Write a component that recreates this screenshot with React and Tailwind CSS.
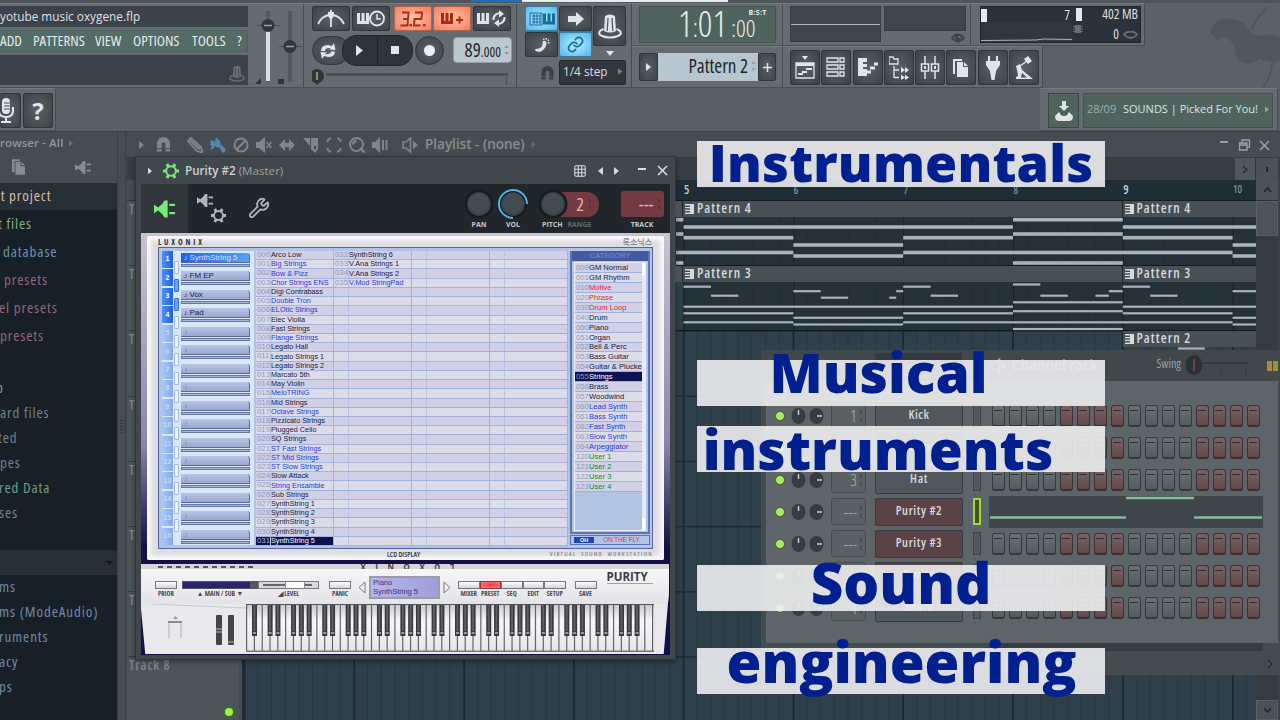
import React from "react";
import { Link, Wrench, Grid3x3 } from "lucide-react";

const COND = "font-['Open_Sans',sans-serif] [font-stretch:75%] whitespace-nowrap";
const SANS = "font-['Open_Sans',sans-serif] [font-stretch:100%] whitespace-nowrap";
const ARIAL = "font-['Liberation_Sans',sans-serif] whitespace-nowrap";
const DARK_BTN =
  "flex items-center justify-center shrink-0 rounded-[2px] border border-[#30363b] bg-radial from-[#5a6266] to-[#3c4348] text-[#dfe5e8]";
const BLUE_BTN =
  "flex items-center justify-center shrink-0 rounded-[2px] border border-[#3a7ea3] bg-radial from-[#b4efff] to-[#4db8ee] text-[#1b6a9c]";
const RED_BTN =
  "flex items-center justify-center shrink-0 rounded-[2px] border border-[#b3604d] bg-radial from-[#ffc6ac] to-[#f57a5c] text-[#b02a12]";

function Icon({ w = 20, h = 20, vb, children, className = "" }) {
  return (
    <svg width={w} height={h} viewBox={vb || `0 0 ${w} ${h}`} className={`block shrink-0 ${className}`} fill="currentColor">
      {children}
    </svg>
  );
}

const Tri = ({ w = 5, h = 8, className = "" }) => (
  <Icon w={w} h={h} vb="0 0 5 8" className={className}>
    <path d="M0 0L5 4L0 8Z" />
  </Icon>
);

const Magnet = ({ className = "", w = 15, h = 16 }) => (
  <Icon w={w} h={h} vb="0 0 15 16" className={className}>
    <path d="M0.5 12V7a7 7 0 0 1 14 0v5h-5V7.5a2 2 0 0 0-4 0V12Z M0.5 13h5v2.5h-5Z M9.5 13h5v2.5h-5Z" />
  </Icon>
);

const Keys = () => <path d="M0 0H3V8H4.5V0H7.5V8H9V0H12V11H0Z" />;

const Hat = ({ w = 24, h = 26, className = "", slat = "#4a5257" }) => (
  <Icon w={w} h={h} vb="0 0 24 26" className={className}>
    <path d="M7 3Q12 0 17 3L18 18Q12 21 6 18Z" />
    <path d="M10 5L9.200 18M14 5L14.800 18" stroke={slat} strokeWidth="1.200" />
    <path d="M5.500 16C0 18 0 21.500 4 23Q12 26 20 23C24 21.500 24 18 18.500 16" fill="none" stroke="currentColor" strokeWidth="2" />
  </Icon>
);

const Plug = ({ w = 20, h = 16, className = "" }) => (
  <Icon w={w} h={h} vb="0 0 20 16" className={className}>
    <path d="M0 4L4 6.500L8 3L10 0H13V16H10L8 13L4 9.500L0 12Z" />
    <path d="M14.500 4H20M14.500 12H20" stroke="currentColor" strokeWidth="2.2" />
  </Icon>
);

const Gear = ({ w = 16, h = 16, className = "" }) => (
  <Icon w={w} h={h} vb="0 0 16 16" className={className}>
    <circle cx="8" cy="8" r="4.800" fill="none" stroke="currentColor" strokeWidth="2" />
    <path d="M13 8H16M0 8H3M10.500 3.700L12 1.100M5.500 3.700L4 1.100M10.500 12.300L12 14.900M5.500 12.300L4 14.900" stroke="currentColor" strokeWidth="3" />
  </Icon>
);

const Docs = ({ w = 15, h = 18, className = "" }) => (
  <Icon w={w} h={h} vb="0 0 15 18" className={className}>
    <path d="M0 0H9V2H3V15H0Z M4 3H10V8H15V18H4Z M11 3L15 7H11Z" />
  </Icon>
);

function Panel({ className = "", children }) {
  return (
    <div className={`shrink-0 border-t border-r border-b border-t-[#747c81] border-r-[#464d52] border-b-[#4a5156] bg-[#646c71] ${className}`}>
      {children}
    </div>
  );
}

function FilePanel() {
  return (
    <Panel className="flex h-[85px] w-[304px]">
      <div className="flex w-[248px] flex-col gap-[3px] pt-[2px]">
        <div className={`flex h-[21px] items-center bg-[#3c4249] text-[11.800px] text-[#dde1e4] ${SANS}`}>yotube music oxygene.flp</div>
        <div className={`flex h-[22px] items-center border border-l-0 border-[#48615d] bg-[#556b68] pb-[2px] text-[15px] text-[#e3eae9] ${COND}`}>
          <span className="w-[33px]">ADD</span>
          <span className="w-[62px]">PATTERNS</span>
          <span className="w-[38px]">VIEW</span>
          <span className="w-[59px]">OPTIONS</span>
          <span className="w-[45px]">TOOLS</span>
          <span>?</span>
        </div>
        <div className="flex h-[30px] items-end justify-end bg-[#3c4249] pr-[3px] pb-[3px] text-[#6a7278]">
          <Hat w={16} h={17} slat="#3c4249" />
        </div>
      </div>
      <Icon w={54} h={82} className="text-[#30363c]">
        <rect x="18" y="7" width="4" height="71" fill="#535a5f" />
        <rect x="40" y="7" width="4" height="71" fill="#535a5f" />
        <rect x="18" y="26" width="4" height="51" fill="#d7dee2" />
        <path d="M9 21.500H32M31 42.500H54" stroke="#474e53" />
        <circle cx="20" cy="21.500" r="6.500" />
        <circle cx="42" cy="42.500" r="6.500" />
        <path d="M16 21.500H24M38 42.500H46" stroke="#9aa2a7" strokeWidth="1.500" />
        <path d="M7 80L13 74V80Z M30 75H36V80H30Z" />
      </Icon>
    </Panel>
  );
}

function TransportPanel() {
  return (
    <Panel className="flex h-[85px] w-[213px] flex-col pt-[2px] pl-[8px]">
      <div className="flex h-[25px] gap-[2px]">
        <div className={`w-[38px] ${DARK_BTN}`}>
          <Icon w={28} h={17}>
            <path d="M1 14Q5 6 12 5M27 14Q23 6 16 5M14 0V17" fill="none" stroke="currentColor" strokeWidth="1.800" />
            <path d="M11 2H17V6L14 10L11 6Z" />
          </Icon>
        </div>
        <div className={`w-[38px] ${DARK_BTN}`}>
          <Icon w={28} h={17}>
            <g transform="translate(0,3)"><Keys /></g>
            <circle cx="20" cy="8.500" r="7" fill="none" stroke="currentColor" strokeWidth="1.800" />
            <path d="M20 4V9H24" fill="none" stroke="currentColor" strokeWidth="1.500" />
          </Icon>
        </div>
        <div className={`ml-[2px] w-[38px] ${RED_BTN}`}>
          <Icon w={28} h={16}>
            <path d="M3 1.500H9.500L9 8L8.500 14.500H1.500M4 8H9M16 1.500H23L22.500 8H15.500L15 14.500H21.500" fill="none" stroke="currentColor" strokeWidth="1.900" />
            <path d="M10.500 13H13V15.500H10.500ZM24 13H26.500V15.500H24Z" />
          </Icon>
        </div>
        <div className={`-ml-px w-[38px] ${RED_BTN}`}>
          <Icon w={24} h={14}>
            <g transform="translate(1,1)"><Keys /></g>
            <path d="M16 8H23M19.500 4.500V11.500" stroke="currentColor" strokeWidth="2" />
          </Icon>
        </div>
        <div className={`w-[38px] ${DARK_BTN}`}>
          <Icon w={30} h={17}>
            <g transform="translate(0,3)"><Keys /></g>
            <path d="M16.500 10A6 6 0 0 1 24 3.500M27.500 7A6 6 0 0 1 20 13.500" fill="none" stroke="currentColor" strokeWidth="2" />
            <path d="M22 0L27 4L22 7.500Z M22 17L17 13L22 9.500Z" />
          </Icon>
        </div>
      </div>
      <div className="mt-[4px] flex h-[30px] items-center">
        <div className={`h-[29px] w-[38px] rounded-full! pr-[6px] ${DARK_BTN}`}>
          <Icon w={16} h={16} className="mt-[1px]">
            <path d="M1 8Q1 2 8 2L12 3L14 0L15.500 7L9 6.500L11 5Q5 4.500 5 8Z M15 8.500Q15 14 8 14L4 13L2 16L0.500 9L7 9.500L5 11.200Q11 11.500 11 8.500Z" />
          </Icon>
        </div>
        <div className="-ml-[8px] flex h-[31px] w-[71px] items-center rounded-[14px] border border-[#23282d] bg-[#2f343a] text-[#e3e8ea]">
          <div className="flex h-full w-[35px] items-center justify-center border-r border-[#1f2428]"><Tri w={7} h={11} /></div>
          <div className="flex h-full w-[35px] items-center justify-center"><div className="size-[8px] bg-[#dde3e6]" /></div>
        </div>
        <div className={`ml-[2px] size-[29px] rounded-full! ${DARK_BTN}`}><div className="size-[11px] rounded-full bg-[#eceff1]" /></div>
        <div className={`ml-[9px] flex h-[26px] w-[59px] items-center justify-end rounded-[4px] border border-[#8f9aa1] bg-[#bcc8cf] pr-[1px] text-[#22282c] ${COND}`}>
          <span className="text-[19px]">89</span>
          <span className="mt-[4px] text-[13.500px]">.000</span>
          <Icon w={7} h={12} className="ml-[2px] text-[#8f9aa1]"><path d="M1 4L3.500 1L6 4ZM1 8L3.500 11L6 8Z" /></Icon>
        </div>
      </div>
      <Icon w={202} h={20} className="text-[#2f353a]">
        <rect x="14" y="8" width="182" height="3" fill="#4b5257" />
        <path d="M194.500 12V20" stroke="#4b5257" />
        <circle cx="5" cy="11" r="7" />
        <path d="M2 17H8L5 20Z" />
        <path d="M5 7V15" stroke="#a9b84c" strokeWidth="1.500" />
      </Icon>
    </Panel>
  );
}

function SnapPanel() {
  return (
    <Panel className="flex h-[85px] w-[115px] flex-col pt-[2px] pl-[8px]">
      <div className="flex gap-[1px]">
        <div className="flex flex-col gap-[1px]">
          <div className={`h-[25px] w-[33px] ${BLUE_BTN}`}>
            <Icon w={26} h={14}>
              <path d="M1 1H13V13H1Z M3 4H12M3 7H12M3 10H12M5 2V12M8 2V12M11 2V12" fill="none" stroke="currentColor" strokeWidth="1" />
              <g transform="translate(14,1.500)"><Keys /></g>
            </Icon>
          </div>
          <div className={`h-[25px] w-[33px] ${DARK_BTN}`}>
            <Icon w={16} h={16}><path d="M9 4Q12.500 3 12.500 6.500Q12 10 10 12Q7 16 4 14.500Q1 15 1 12.500Q2 11.500 5 11.500Q8.500 10 8.500 7Z M9 1.500H10.500V3H9ZM11.500 1H13V2.500H11.500ZM13.500 2.500H15V4H13.500ZM14 5H15.500V6.500H14Z" /></Icon>
          </div>
        </div>
        <div className="flex flex-col gap-[1px]">
          <div className={`h-[25px] w-[33px] ${DARK_BTN}`}><Icon w={16} h={14}><path d="M0 4H8V0L16 7L8 14V10H0Z" /></Icon></div>
          <div className={`h-[25px] w-[33px] ${BLUE_BTN}`}><Link size={17} strokeWidth={2.4} /></div>
        </div>
        <div className="flex flex-col items-center gap-[5px]">
          <div className={`h-[40px] w-[33px] ${DARK_BTN}`}><Hat /></div>
          <Icon w={8} h={5} className="text-[#dfe5e8]"><path d="M0 0H8L4 5Z" /></Icon>
        </div>
      </div>
      <div className="mt-[3px] flex h-[25px] items-center">
        <Magnet w={13} h={14} className="ml-[16px] text-[#3a4146]" />
        <div className={`ml-[5px] flex h-[25px] w-[67px] items-center justify-between rounded-[2px] border border-[#24292d] bg-[#31373c] px-[3px] pb-[2px] text-[11.800px] text-[#d8dde0] ${SANS}`}>
          1/4 step <Tri w={4} h={7} className="text-[#7c8488]" />
        </div>
      </div>
    </Panel>
  );
}

function TimePanel() {
  return (
    <div className="flex w-[151px] shrink-0 flex-col">
      <Panel className="h-[43px] pt-[2px] pl-[7px]">
        <div className={`flex h-[37px] w-[137px] border border-[#43544f] bg-[#51635f] pl-[38px] text-[#e4ecea] ${COND}`}>
          <span className="mt-[-6px] text-[36px] leading-[45px] font-light">1<span className="text-[26px]">:</span>01</span>
          <span className="ml-[4px] mt-[4px] text-[24px] leading-[34px] font-light">:00</span>
          <span className={`mt-px -ml-[7px] text-[7px] leading-[10px] font-bold tracking-[0.300px] ${SANS}`}>B:S:T</span>
        </div>
      </Panel>
      <Panel className="flex h-[42px] pt-[6px] pl-[7px]">
        <div className={`h-[28px] w-[19px] ${DARK_BTN}`}><Tri w={5} h={8} /></div>
        <div className={`flex h-[28px] w-[100px] items-center justify-end bg-[#b7c6ce] pr-[1px] pb-[2px] text-[19px] text-[#20272b] ${COND}`}>
          Pattern 2
          <Icon w={7} h={12} className="ml-[2px] text-[#95a3ab]"><path d="M1 4L3.500 1L6 4ZM1 8L3.500 11L6 8Z" /></Icon>
        </div>
        <div className={`h-[28px] w-[18px] ${DARK_BTN}`}><Icon w={9} h={9}><path d="M4.500 0V9M0 4.500H9" stroke="currentColor" strokeWidth="1.500" /></Icon></div>
      </Panel>
    </div>
  );
}

const VIEW_ICONS = [
  <><path d="M7 0H13L10 4Z" /><path d="M1 7H19V22H1Z" fill="none" stroke="currentColor" strokeWidth="1.300" /><path d="M1 7H19V10H1Z" /><path d="M3 18H8M7 16H12M11 13H17" stroke="currentColor" strokeWidth="2.200" /></>,
  <path d="M1 2H12V6H1ZM14 2H18V6H14ZM1 9H12V13H1ZM14 9H18V13H14ZM1 16H12V20H1ZM14 16H18V20H14Z" fill="none" stroke="currentColor" strokeWidth="1.300" />,
  <><path d="M0 2H9V6H5V8H9V11H5V13H9V20H0Z" /><path d="M9 16H13M12 12H17M16 8H20" stroke="currentColor" strokeWidth="3" /></>,
  <><path d="M0 1H4L5 3H9V8H0Z" fill="none" stroke="currentColor" strokeWidth="1.300" /><path d="M5 10V22M5 14H10M5 21.500H10" fill="none" stroke="currentColor" strokeWidth="1.300" /><path d="M12 11L16 14L12 17ZM16 11L20 14L16 17ZM12 18.500L16 21.500L12 24ZM16 18.500L20 21.500L16 24Z" /></>,
  <><path d="M5 0V23M15 0V23" stroke="currentColor" strokeWidth="1.500" /><path d="M1.500 8H8.500V15H1.500ZM11.500 8H18.500V15H11.500Z" fill="#4a5257" stroke="currentColor" strokeWidth="1.500" /><path d="M4 10H6V13H4ZM14 10H16V13H14Z" /></>,
  <path d="M2 3H11V5H4V18H2Z M6 6H12V11H17V21H6Z M13 6L17 10H13Z" />,
  <path d="M5 0H7V5H13V0H15V5H17V9L13 15L11.500 24H8.500L7 15L3 9V5H5Z" />,
  <><path d="M10 3L14 0L18 5L14 8Z" /><path d="M13 5L6 10" stroke="currentColor" strokeWidth="1.500" /><path d="M2 10L6 8L8 14L19 23H2V21L4 20L3 14Z" /><path d="M8 17L13 21.500H7Z" fill="#4a5257" /></>,
];

function TopToolbar() {
  return (
    <div className="flex h-[85px] bg-[#5a6268]">
      <FilePanel />
      <TransportPanel />
      <SnapPanel />
      <TimePanel />
      <div className="flex flex-col">
        <div className="flex">
          <Panel className="flex h-[43px] w-[188px] gap-[3px] pt-[2px] pl-[7px]">
            <div className="flex h-[36px] w-[91px] items-center border border-[#363c42] bg-[#40464c]"><div className="h-px w-full bg-[#aeb6bb]" /></div>
            <div className="flex w-[82px] flex-col items-end">
              <div className="h-[25px] w-full border border-[#363c42] bg-[#40464c]" />
              <Icon w={14} h={10} className="mt-[2px] mr-px text-[#3b4248]"><path d="M1 5Q7 -2 13 5Q7 12 1 5Z" fill="none" stroke="currentColor" strokeWidth="1.800" /><circle cx="7" cy="5" r="2.800" /><circle cx="8" cy="4" r="1" fill="#7a8287" /></Icon>
            </div>
          </Panel>
          <Panel className="h-[43px] w-[174px] pt-[2px] pl-[9px]">
            <div className={`flex h-[37px] w-[161px] border border-[#20262b] bg-[#2b3239] text-[13.500px] leading-[15px] text-[#d9dfe2] ${COND}`}>
              <div className="flex w-[91px] flex-col">
                <div className="flex h-[16px] items-center justify-between pr-[2px]"><div className="h-[13px] w-[6px] bg-[#e3e9ec]" />7</div>
                <Icon w={91} h={19} className="bg-[#30373e]"><path d="M0 17.500L55 17L62 16L91 16.500" fill="none" stroke="#aab2b7" /></Icon>
              </div>
              <div className="flex w-[68px] flex-col pr-[2px] pl-[4px]">
                <div className="flex h-[16px] items-center justify-between"><div className="h-[13px] w-[6px] bg-[#e3e9ec]" />402 MB</div>
                <div className="flex items-center pt-[3px]">
                  <Icon w={10} h={8} className="mb-[10px] -ml-[3px] text-[#656e74]"><path d="M2 0H8V8H2ZM0 1H10V2H0ZM0 3.500H10V4.500H0ZM0 6H10V7H0Z" /></Icon>
                  <span className="mr-[4px] ml-auto">0</span>
                  <Icon w={15} h={9} className="text-[#656e74]"><path d="M1 4.500Q4 1 7.500 2Q11 1 14 4.500Q11 8 7.500 8Q4 8 1 4.500Z" fill="none" stroke="currentColor" strokeWidth="1.800" /></Icon>
                </div>
              </div>
            </div>
          </Panel>
        </div>
        <Panel className="flex h-[42px] w-[260px] gap-[1.300px] pt-[3px] pl-[7px]">
          {VIEW_ICONS.map((ic, i) => (
            <div key={i} className={`h-[35px] w-[30px] ${DARK_BTN}`}><Icon w={20} h={24}>{ic}</Icon></div>
          ))}
        </Panel>
      </div>
      <Icon w={75} h={85} className="ml-auto text-[#50575c]">
        <path d="M5 30Q8 16 25 15Q38 17 46 29Q52 34 60 32Q68 30 75 36V58Q64 60 54 56Q48 62 38 60Q29 56 30 46Q27 36 19 34L10 38Q13 34 5 30Z" />
        <path d="M46 27Q52 14 62 4M68 55Q67 72 58 85" fill="none" stroke="currentColor" strokeWidth="2" />
      </Icon>
    </div>
  );
}

function SecondToolbar() {
  return (
    <div className="flex h-[43px] justify-between bg-[#596167]">
      <Panel className="flex h-[43px] w-[56px] gap-[2px] pt-[4px]">
        <div className={`h-[35px] w-[21px] border-l-0! pr-[8px] ${DARK_BTN}`}>
          <Icon w={16} h={25}>
            <rect x="4" y="0" width="8" height="16" rx="4" />
            <path d="M1 9V13Q1 19 8 19T15 13V9M8 19V23M3 24H13" fill="none" stroke="currentColor" strokeWidth="2" />
            <path d="M6 5H12M6 8H12M6 11H12" stroke="#4a5257" strokeWidth="1" />
          </Icon>
        </div>
        <div className={`h-[35px] w-[30px] text-[24px] font-bold ${DARK_BTN} ${SANS}`}>?</div>
      </Panel>
      <Panel className="mr-[2px] flex h-[43px] w-[238px] gap-[4px] pt-[4px] pl-[8px]">
        <div className="flex h-[35px] w-[31px] items-center justify-center border border-[#394845] bg-[#50635f] text-[#dfe7e5]">
          <Icon w={18} h={20}><path d="M7 0H11V5H14L9 10L4 5H7Z M4 11L0 15Q0 20 4 20H14Q18 20 18 15L14 11L12 14Q12 15 9 15T6 14Z" /></Icon>
        </div>
        <div className={`flex h-[35px] w-[190px] items-center border border-[#43544f] bg-[#51635f] pb-[2px] pl-[3px] text-[11px] text-[#dbe4e2] ${SANS}`}>
          <span className="w-[36px] text-[#9fadaa]">28/09</span>SOUNDS | Picked For You!<Tri w={4} h={7} className="mr-[3px] ml-auto text-[#93a19e]" />
        </div>
      </Panel>
    </div>
  );
}

const BROWSER_TOP = [
  ["-ml-[2px]", "t files", "text-[#7fae80]", "h-[28px]"],
  ["ml-[3px]", "database", "text-[#7090b0]", "h-[28px]"],
  ["ml-[4px]", "presets", "text-[#92647f]", "h-[28px]"],
  ["-ml-[1px]", "el presets", "text-[#92647f]", "h-[28px]"],
  ["ml-0", "presets", "text-[#92647f]", "h-[28px]"],
  ["-ml-[4px]", "p", "text-[#7fae80]", "h-[25px] mt-[26px]"],
  ["ml-0", "ard files", "text-[#70828e]", "h-[25px]"],
  ["-ml-[2px]", "ted", "text-[#70828e]", "h-[25px]"],
  ["ml-0", "pes", "text-[#70828e]", "h-[25px]"],
  ["-ml-[1px]", "red Data", "text-[#6f9c80]", "h-[25px]"],
  ["-ml-[1px]", "ses", "text-[#70828e]", "h-[25px]"],
];
const BROWSER_BOTTOM = [
  ["-ml-[1px]", "ms"],
  ["-ml-[1px]", "ms (ModeAudio)"],
  ["-ml-[1px]", "ruments"],
  ["-ml-[1px]", "acy"],
  ["-ml-[1px]", "ps"],
];

function Browser() {
  return (
    <div className="flex w-[127px] shrink-0 bg-[#40484d]">
      <div className={`flex w-[117px] flex-col overflow-hidden text-[15px] tracking-[0.9px] ${COND}`}>
        <div className="flex h-[51px] shrink-0 flex-col bg-[#454d52]">
          <div className={`flex items-center gap-[6px] pt-[3px] text-[11.500px] leading-[16px] font-semibold tracking-[0.100px] text-[#8e969b] ${SANS}`}>rowser - All <Tri w={4} h={7} className="text-[#6b7378]" /></div>
          <div className="flex items-center pt-[8px] pl-[12px] text-[#858d92]"><Docs w={13} h={16} /><Plug w={16} h={13} className="ml-[50px]" /></div>
        </div>
        <div className="flex h-[27px] shrink-0 items-center bg-[#272f36] text-[#d9bdaa]"><span className="-ml-[7px] pb-[2px]">nt project</span></div>
        <div className="flex h-[340px] shrink-0 flex-col bg-[#172026]">
          {BROWSER_TOP.map(([ml, t, c, h], i) => (
            <div key={i} className={`flex shrink-0 items-center pb-[2px] ${h} ${c}`}><span className={ml}>{t}</span></div>
          ))}
        </div>
        <div className="flex h-[25px] shrink-0 items-center justify-end bg-[#272f36] pr-[4px]"><Icon w={7} h={4} className="text-[#11171b]"><path d="M0 0H7L3.500 4Z" /></Icon></div>
        <div className="flex flex-1 flex-col bg-[#172026] text-[#7088a8]">
          {BROWSER_BOTTOM.map(([ml, t]) => (
            <div key={t} className="flex h-[25px] items-center pb-[2px]"><span className={ml}>{t}</span></div>
          ))}
        </div>
      </div>
      <div className="flex h-full w-[9px] items-center justify-center border-x border-[#394146] bg-[#454d52]">
        <div className="h-[14px] w-[3px] bg-[repeating-linear-gradient(0deg,#353d42_0_1px,transparent_1px_3px)]" />
      </div>
    </div>
  );
}

const TOOL_ICONS = [
  ["ml-[16px]", <path key="a" d="M1 4L4 1L14 10L16 16L10 14Z M4 4L13 12M2.500 2.500L12 12" fill="none" stroke="currentColor" strokeWidth="1.800" />],
  ["ml-[7px] text-[#5288ad]", <path key="a" d="M0 8L1 3L5 5L6 0L10 4L11 8L8 11L5 9L3 12L0 13L2 9Z M9 10L12 8L16 13L14 16L12 15Z" />],
  ["ml-[7px]", <path key="a" d="M14.500 8A6.500 6.500 0 1 1 1.500 8A6.500 6.500 0 1 1 14.500 8M4 12L12 4" fill="none" stroke="currentColor" strokeWidth="2" />],
  ["ml-[7px]", <g key="a"><path d="M0 5H3L9 0V16L3 11H0Z" /><path d="M10.500 5L15.500 11M15.500 5L10.500 11" stroke="currentColor" strokeWidth="1.500" /></g>],
  ["ml-[7px]", <path key="a" d="M0 8L6 2V6H10V2L16 8L10 14V10H6V14Z" />],
  ["ml-[8px]", <path key="a" d="M0 1H7V9Z M8 1H15V12L12 16L8 12ZM11 9V12H13V9Z" fillRule="evenodd" />],
  ["ml-[7px]", <path key="a" d="M1.500 5V3.500L3.500 1.500H5M11 1.500H12.500L14.500 3.500V5M14.500 11V12.500L12.500 14.500H11M5 14.500H3.500L1.500 12.500V11" fill="none" stroke="currentColor" strokeWidth="2" />],
  ["ml-[7px]", <g key="a" fill="none" stroke="currentColor"><circle cx="7.500" cy="7.500" r="6.500" strokeWidth="2" /><path d="M4 7.500A3.500 3.500 0 0 1 7.500 4M11 11L15.500 15.500" strokeWidth="2.500" /></g>],
  ["ml-[7px]", <g key="a"><path d="M0 5H3L8 0V16L3 11H0Z" /><path d="M11 3V13M14.500 3V13" stroke="currentColor" strokeWidth="2" /></g>],
];

const SpeakerOut = ({ className = "" }) => (
  <Icon w={17} h={16} className={className}>
    <path d="M1 5H4L8.500 1V15L4 11H1Z" fill="none" stroke="currentColor" strokeWidth="1.600" />
    <path d="M11 3.500L16 8L11 12.500Z" />
  </Icon>
);

const X = { 5: 8.6, 6: 118.4, 7: 228.2, 8: 338, 9: 447.8, 10: 557.6, e: 581 };
const P4 = [
  [0, 8.4, 19.7], [0, 8.4, 34], [0, 8.4, 63],
  [X[5], X[8], 27], [X[5], X[6], 37.7], [0, X[6], 52.5],
  [X[6], X[7], 45], [X[6], X[7], 56],
  [X[7], X[8], 37.7], [X[7], X[10], 52.5],
  [X[8], X[9], 19.7], [X[8], X[9], 34], [X[8], X[9], 63],
  [X[9], X.e, 27], [X[9], X[10], 37.7], [X[10], X.e, 45], [X[10], X.e, 56],
];
const Q = 27.4;
const P3 = [
  [X[5], X[5] + Q, 86.7], [X[5] + Q, X[5] + 2 * Q, 95.7],
  [X[7], X[7] + Q, 86.7], [X[7] + Q, X[7] + 2 * Q, 95.7],
  [X[9], X[9] + Q, 86.7], [X[9] + Q, X[9] + 2 * Q, 95.7],
  [X[6], X[6] + Q, 91.2], [X[6] + Q, X[6] + 2 * Q, 97.7],
  [X[7] - 14, X[7] - 7, 97.7], [X[7] - 7, X[7], 91.2],
  [X[8], X[8] + Q, 84.5], [X[8] + Q, X[8] + 2 * Q, 95.7],
  [X[9] - Q, X[9] - 14, 95.7], [X[9] - 14, X[9], 91.2], [X[10], X.e, 91.2],
  [X[5], X[8], 106.7], [X[9], X.e, 106.7],
  [X[5], X[6], 113.3], [X[7], X[8], 113.3], [X[9], X[10], 113.3],
  [X[5], X[6], 122.3], [X[7], X[10], 122.3],
  [X[6], X[7], 117.8], [X[6], X[7], 124.5], [X[10], X.e, 117.8], [X[10], X.e, 124.5],
  [X[8], X[9], 102.3], [X[8], X[9], 111.2], [X[8], X[9], 129],
  [X[9] + 55, X[9] + 82, 148.5],
];

const CLIPS = [
  ["h-[16px] mb-[49px]", "Pattern 4", true],
  ["h-[16px] mb-[49px]", "Pattern 3", true],
  ["h-[16px]", "Pattern 2", false],
];

function ClipLabel({ children }) {
  return (
    <span className="flex items-center gap-[3px] pb-[2px] pl-[2px]">
      <Icon w={9} h={10} className="mt-[2px] text-[#d5dadd]"><path d="M0 0H9V10H0V8.500H5V7H0V5.800H5V4.200H0V3H5V1.500H0Z" /></Icon>
      {children}
    </span>
  );
}

function Playlist() {
  return (
    <div className="flex min-w-0 flex-1 flex-col bg-[#454d52]">
      <div className="flex h-[26px] shrink-0 items-center border-b border-[#353d42] pl-[12px] text-[#7e868b]">
        <Tri w={5} h={8} />
        <Magnet w={15} h={15} className="ml-[12px]" />
        {TOOL_ICONS.map(([c, ic], i) => (
          <Icon key={i} w={16} h={16} className={c}>{ic}</Icon>
        ))}
        <SpeakerOut className="ml-[14px]" />
        <span className={`ml-[6px] text-[13.500px] font-semibold text-[#858d91] ${SANS}`}>Playlist - (none)</span>
        <Tri w={5} h={7} className="ml-[6px] text-[#636b70]" />
        <Icon w={52} h={12} className="mr-[9px] ml-auto text-[#9ba2a6]">
          <path d="M1 3H9" stroke="currentColor" strokeWidth="2" />
          <path d="M20.500 4H28V11H20.500ZM20.500 6H28M23 4V1H30.500V8H28" fill="none" stroke="currentColor" strokeWidth="1.300" />
          <path d="M41 2L50 11M50 2L41 11" stroke="currentColor" strokeWidth="1.500" />
        </Icon>
      </div>
      <div className="flex h-[22px] shrink-0 bg-[#363e43]">
        <div className="ml-auto flex w-[21px] items-center justify-center border-r border-[#30383d] bg-[#50585d] text-[#262d31]"><Icon w={6} h={9}><path d="M1 1L5 4.500L1 8" fill="none" stroke="currentColor" strokeWidth="1.500" /></Icon></div>
        <div className="mr-[2px] flex w-[22px] items-center justify-center bg-[#4a5257]"><div className="h-[5px] w-[2px] bg-[#20272b]" /></div>
      </div>
      <div className="flex min-h-0 flex-1">
        <div className={`flex w-[117px] flex-col overflow-hidden border-r-2 border-[#1e2b33] text-[13.500px] tracking-[0.9px] text-[#7e868a] ${COND}`}>
          <div className="h-[21px] shrink-0 border-b border-[#2b3338]" />
          {[1, 2, 3, 4, 5, 6, 7].map((n) => (
            <div key={n} className="h-[65.200px] shrink-0 border-b border-[#353d42] bg-[#4a5459] pt-px pl-[2px] leading-[14px] font-semibold">Track {n}</div>
          ))}
          <div className="mr-[3px] flex h-[65px] shrink-0 flex-col bg-[#4d555a] pl-[2px] leading-[16px] font-semibold">
            Track 8
            <div className="mt-[33px] mr-[4px] size-[12px] self-end rounded-full border-2 border-[#3c6a1f] bg-[#a4ee4c]" />
          </div>
        </div>
        <div className="relative flex w-[1012px] flex-col bg-[#2f404a]">
          <div className={`flex h-[21px] shrink-0 items-center border-b border-[#141d22] bg-[#1f2d34] pl-[440px] text-[10.500px] text-[#99a5aa] ${COND}`}>
            {["5", "6", "7", "8", "9", "10"].map((n) => (
              <span key={n} className={n === "5" || n === "9" ? "w-[109.800px] shrink-0 text-[12px] font-semibold text-[#c5ced2]" : n === "10" ? "shrink-0" : "w-[109.800px] shrink-0 pt-[2px]"}>{n}</span>
            ))}
          </div>
          <div className="flex min-h-0 flex-1 overflow-hidden">
            <svg width="1012" height="520" className="block shrink-0">
              {Array.from({ length: 75 }, (_, i) => (
                <rect key={i} x={i * 13.725 - 0.3} y="0" width={i % 8 === 0 ? 1.6 : 0.8} height="520" fill={i % 8 === 0 ? "#182730" : "#273740"} />
              ))}
              {Array.from({ length: 8 }, (_, i) => (
                <rect key={i} x="0" y={i * 65.2 - 1} width="1012" height="1.300" fill="#1b2a33" />
              ))}
            </svg>
          </div>
          <div className={`absolute top-[21px] left-[431px] flex w-[581px] flex-col text-[13.500px] tracking-[1.100px] text-[#d3d9dc] ${COND}`}>
            {CLIPS.map(([h, label, both]) => (
              <div key={label} className={`z-10 flex shrink-0 font-semibold ${h}`}>
                {both ? <div className="w-[8px] border-r border-[#20282d] bg-[#495156]" /> : <div className="w-[8px]" />}
                {both ? <div className="flex w-[439.500px] items-center border-r border-[#20282d] bg-[#475055]"><ClipLabel>{label}</ClipLabel></div> : <div className="w-[439.500px]" />}
                <div className="flex flex-1 items-center bg-[#475055]"><ClipLabel>{label}</ClipLabel></div>
              </div>
            ))}
            <svg width="581" height="150" viewBox="0 1 581 150" className="absolute top-0 left-0 block">
              <rect x="0" y="17" width="581" height="48" fill="#26323a" />
              <rect x="8" y="82" width="573" height="48" fill="#26323a" />
              {Array.from({ length: 42 }, (_, i) => <rect key={i} x={8.6 + i * 13.725} y="17" width="0.600" height="113" fill="#212c33" />)}
              {[8.6, 118.4, 228.2, 338, 447.8, 557.6].map((x) => <rect key={x} x={x} y="17" width="1" height="113" fill="#18232a" />)}
              <path d="M0 65.500H581M0 130.500H581" stroke="#111a20" />
              {P4.map(([a, b, y], i) => <rect key={i} x={a} y={y - 1.8} width={b - a} height="3.600" fill="#a9b3b9" />)}
              {P3.map(([a, b, y], i) => <rect key={i} x={a} y={y - 1.1} width={b - a} height="2.200" fill="#a9b3b9" />)}
            </svg>
          </div>
        </div>
        <div className="flex w-[22px] flex-col bg-[#343b41] text-[#20272b]">
          <div className="flex h-[21px] items-center justify-center border-b border-[#2b3237] bg-[#4b5358]"><Icon w={9} h={6}><path d="M1 5L4.500 1L8 5" fill="none" stroke="currentColor" strokeWidth="1.500" /></Icon></div>
          <div className="h-[35px] border border-[#596166] bg-[#4d555a]" />
          <div className="mt-auto flex h-[20px] items-center justify-center border border-[#596166] bg-[#4b5358]"><Icon w={9} h={6}><path d="M1 1L4.500 5L8 1" fill="none" stroke="currentColor" strokeWidth="1.500" /></Icon></div>
        </div>
        <div className="w-[2px] bg-[#3b4348]" />
      </div>
    </div>
  );
}

const K = "text-[#20203c]";
const B = "text-[#2838e0]";
const PRESETS = [
  ["Arco Low", K], ["Big Strings", B], ["Bow & Pizz", B], ["Chor Strings ENS", B], ["Digi Contrabass", K], ["Double Tron", B],
  ["ELOtic Strings", B], ["Elec Violia", K], ["Fast Strings", K], ["Flange Strings", B], ["Legato Hall", K], ["Legato Strings 1", K],
  ["Legato Strings 2", K], ["Marcato 5th", K], ["May Violin", K], ["MeloTRING", B], ["Mid Strings", K], ["Octave Strings", B],
  ["Pizzicato Strings", K], ["Plugged Cello", K], ["SQ Strings", K], ["ST Fast Strings", B], ["ST Mid Strings", B], ["ST Slow Strings", B],
  ["Slow Attack", K], ["String Ensamble", B], ["Sub Strings", K], ["SynthString 1", K], ["SynthString 2", K], ["SynthString 3", K],
  ["SynthString 4", K], ["SynthString 5", "text-white"],
];
const PRESETS2 = [["SynthString 6", K], ["V.Ana Strings 1", K], ["V.Ana Strings 2", K], ["V.Mod StringPad", B]];
const R = "text-[#f0202a]";
const G = "text-[#188a1c]";
const CATS = [
  ["000", "GM Normal", K], ["001", "GM Rhythm", K], ["010", "Motive", R], ["020", "Phrase", R], ["030", "Drum Loop", R], ["040", "Drum", K],
  ["050", "Piano", K], ["051", "Organ", K], ["052", "Bell & Perc", K], ["053", "Bass Guitar", K], ["054", "Guitar & Plucked", K],
  ["055", "Strings", "text-white"], ["056", "Brass", K], ["057", "Woodwind", K], ["060", "Lead Synth", B], ["061", "Bass Synth", B],
  ["062", "Fast Synth", B], ["063", "Slow Synth", B], ["064", "Arpeggiator", B], ["120", "User 1", G], ["121", "User 2", G],
  ["122", "User 3", G], ["123", "User 4", G],
];
const SLOTS = ["SynthString 5", "FM EP", "Vox", "Pad", "", "", "", "", "", "", "", "", "", "", "", ""];
const pad = (n) => String(n).padStart(3, "0");

function PresetColumn({ start, items, w }) {
  return (
    <div className={`flex shrink-0 flex-col ${w}`}>
      {Array.from({ length: 32 }, (_, i) => {
        const it = items[i];
        const sel = start === 0 && i === 31;
        return (
          <div key={i} className={`flex h-[9.230px] shrink-0 items-center border-r border-b border-[#a3b3dc] leading-[8px] ${sel ? "bg-[#0c1450]" : i % 2 ? "bg-[#dcdce8]" : "bg-[#d0d0e6]"}`}>
            <span className={`h-full w-[15px] shrink-0 border-r border-[#b9c4e2] pl-[1px] text-[7.800px] ${sel ? "text-[#a7b0dc]" : "text-[#8e9abd]"}`}>{it ? pad(start + i) : ""}</span>
            {it && <span className={it[1]}>{it[0]}</span>}
          </div>
        );
      })}
    </div>
  );
}

function Knob({ ring }) {
  return (
    <Icon w={32} h={32}>
      <circle cx="16" cy="16" r="14.500" fill="#181d20" />
      {ring && <path d="M16 30A14 14 0 1 1 30 16" fill="none" stroke="#4fb4e0" strokeWidth="2" />}
      <circle cx="16" cy="16" r="11.800" fill="#3d444b" />
      <circle cx="16" cy="15" r="10" fill="#444c53" />
    </Icon>
  );
}

function PianoKeys() {
  const step = 406 / 52;
  const blacks = [];
  for (let i = 1; i < 52; i++) if ([1, 3, 4, 6, 0].includes(i % 7)) blacks.push(i);
  return (
    <svg width="408" height="48" className="block shrink-0">
      <defs><linearGradient id="wk" x1="0" y1="0" x2="0" y2="1"><stop offset="0" stopColor="#c9c9cd" /><stop offset="0.350" stopColor="#f6f6f8" /><stop offset="1" stopColor="#e6e6ea" /></linearGradient></defs>
      <rect width="408" height="48" fill="url(#wk)" />
      <rect y="46.500" width="408" height="1.500" fill="#75757c" />
      {Array.from({ length: 53 }, (_, i) => <rect key={i} x={i * step} y="0" width="1.200" height="47" fill="#63636a" />)}
      {blacks.map((i) => (
        <g key={i}>
          <rect x={i * step - 1.8} y="0" width="5" height="32" fill="#39393e" />
          <rect x={i * step - 0.3} y="1" width="1.800" height="26" fill="#606066" />
          <rect x={i * step - 0.8} y="28" width="3" height="2" fill="#99999f" />
        </g>
      ))}
      <rect width="408" height="1" fill="#55555c" />
    </svg>
  );
}

const HW_BTN = "h-[8px] border border-[#77777f] bg-linear-to-b from-white to-[#d4d4da]";

function HwButton({ label, w, red }) {
  return (
    <div className={`flex shrink-0 flex-col items-center ${w}`}>
      <div className={red ? "h-[8px] w-full border border-[#8e3b46] bg-radial from-[#ff3038] to-[#f07b86]" : `w-full ${HW_BTN}`} />
      <span className="mt-px leading-[8px]">{label}</span>
    </div>
  );
}

function PluginWindow() {
  return (
    <div className="absolute top-[156px] left-[135px] flex h-[504px] w-[541px] flex-col border border-[#2e363b] bg-[#40484d] px-[5px] shadow-[0_2px_5px_rgba(0,0,0,0.35)]">
      <div className="flex h-[27px] shrink-0 items-center pl-[7px] text-[#d5dadd]">
        <Tri w={4} h={8} />
        <Gear className="ml-[11px] text-[#79e87a]" />
        <span className={`ml-[6px] text-[11.600px] font-semibold text-[#ccd2d5] ${SANS}`}>Purity #2 <span className="font-normal text-[#9aa1a6]">(Master)</span></span>
        <Grid3x3 size={14} strokeWidth={1.8} className="ml-auto" />
        <Tri w={5} h={10} className="ml-[11px] rotate-180" />
        <Tri w={5} h={10} className="ml-[11px]" />
        <div className="mb-[4px] ml-[19px] h-[2px] w-[8px] bg-[#d5dadd]" />
        <Icon w={11} h={11} className="mr-[2px] ml-[11px]"><path d="M1 1L10 10M10 1L1 10" stroke="currentColor" strokeWidth="1.600" /></Icon>
      </div>
      <div className="flex h-[49px] shrink-0 bg-[#20262a] pr-[6px] text-[#b0b7bb]">
        <div className="flex w-[47px] items-center justify-center bg-[#30363b] text-[#72ee74]"><Plug w={21} h={18} /></div>
        <div className="ml-[9px] flex w-[28px] pt-[10px]"><Plug w={16} h={13} /><Gear w={15} h={15} className="mt-[14px] -ml-[2px]" /></div>
        <Wrench size={22} strokeWidth={2} className="mt-[13px] ml-[23px]" />
        <div className={`ml-auto flex text-[7px] font-bold text-[#c4cacd] ${SANS}`}>
          <div className="flex w-[34px] flex-col items-center pt-[4px]"><Knob /><span className="leading-[10px]">PAN</span></div>
          <div className="flex w-[34px] flex-col items-center pt-[4px]"><Knob ring /><span className="leading-[10px]">VOL</span></div>
          <div className="ml-[7px] flex w-[70px] flex-col pt-[4px]">
            <div className="flex items-center"><div className="z-10"><Knob /></div><div className={`-ml-[8px] flex h-[25px] w-[38px] items-center justify-center rounded-r-[12px] bg-[#743a42] pl-[8px] text-[18px] font-normal text-[#e9b7a6] ${COND}`}>2<Icon w={4} h={12} className="ml-[4px] text-[#4c272d]"><path d="M0.500 1L3 3L0.500 5M3.500 7L1 9L3.500 11" fill="none" stroke="currentColor" /></Icon></div></div>
            <span className="pl-[5px] leading-[10px]">PITCH <span className="pl-[3px] text-[#5f676c]">RANGE</span></span>
          </div>
          <div className="ml-[13px] flex w-[44px] flex-col items-center pt-[7px]">
            <div className={`flex h-[26px] w-[43px] items-center justify-end rounded-[3px] bg-[#743a42] pr-[3px] text-[18px] font-normal text-[#e9b7a6] ${COND}`}>---<Icon w={4} h={12} className="ml-[3px] text-[#4c272d]"><path d="M0.500 1L3 3L0.500 5M3.500 7L1 9L3.500 11" fill="none" stroke="currentColor" /></Icon></div>
            <span className="mt-[3px] leading-[10px]">TRACK</span>
          </div>
        </div>
      </div>
      <div className="flex h-[422px] shrink-0 flex-col bg-linear-to-b from-[#c9c3d4] via-[#8c84ad] to-[#140f45] to-75%">
        <div className="mx-[6px] mt-[3px] flex h-[324px] w-[517px] shrink-0 flex-col rounded-[2px] bg-[#dedee2] px-[11px] shadow-[inset_0_0_4px_4px_#fafafc]">
          <div className="flex h-[11px] items-center justify-between text-[8px] leading-[10px]">
            <span className={`font-bold tracking-[2.800px] text-[#333340] ${COND}`}>LUXONIX</span>
            <span className="pr-[1px] font-['Noto_Sans_CJK_KR',sans-serif] text-[8px] font-medium text-[#85858c]">룩소닉스</span>
          </div>
          <div className={`flex h-[302px] w-[495px] shrink-0 border border-[#56659f] bg-[#b3c3e6] py-[3px] pl-[3px] text-[7.300px] ${ARIAL}`}>
            <div className="flex w-[92px] flex-col bg-[#dbe6f6]">
              {SLOTS.map((s, i) => (
                <div key={i} className="flex h-[18.460px] shrink-0 items-start gap-[1px]">
                  <div className={`flex h-[17px] w-[11px] items-center justify-center text-[7px] font-bold ${i < 4 ? "bg-linear-to-r from-[#4f92f5] to-[#1f5ee0] text-white" : "bg-linear-to-r from-[#a8c8f6] to-[#83a9ea] text-[#c4dafa]"}`}>{i + 1}</div>
                  <div className={`mt-[10px] h-[13px] w-[5px] shrink-0 rounded-[1px] border ${i === 1 || i === 2 ? "border-[#2a6fe8] bg-[#6fa2f2]" : "border-[#9fb8e6] bg-[#eef4fc]"} ${i === 15 ? "invisible" : ""}`} />
                  <div className="ml-[1px] flex flex-col gap-[1px] pt-[2px]">
                    <div className={`flex h-[10px] w-[69px] items-center rounded-tr-[3px] border-r border-b border-[#5a6a9a] pl-[3px] text-[8px] leading-[9px] ${i === 0 ? "bg-linear-to-r from-[#1f62ee] to-[#58a0fa] text-[#cfe2ff]" : "bg-linear-to-b from-[#b9c4e6] to-[#9ba9d0] text-[#1d2346]"}`}>
                      <span className={`mr-[2px] text-[7px] ${i > 3 ? "text-[#6d7cb4]" : ""}`}>♪</span>{s}
                    </div>
                    <div className="h-[3px] w-[69px] border border-[#6678aa] bg-[#a7b4da]" />
                  </div>
                </div>
              ))}
            </div>
            <div className="ml-[2px] flex">
              <PresetColumn start={0} items={PRESETS} w="w-[78px]" />
              <PresetColumn start={32} items={PRESETS2} w="w-[78px]" />
              <PresetColumn start={64} items={[]} w="w-[78px]" />
              <PresetColumn start={96} items={[]} w="w-[78px]" />
            </div>
            <div className="ml-[2px] flex w-[80px] flex-col">
              <div className="flex h-[284px] flex-col border-2 border-t-0 border-[#5b74b8] bg-[#b3c3e6]">
                <div className="h-[10px] shrink-0 bg-[#46599f] text-center text-[7.300px] leading-[10px] text-[#7e8fc8]">CATEGORY</div>
                <div className="mt-px ml-[2px] flex h-[269px] w-[72px] border border-[#eaf1fb]">
                  <div className="flex w-[67px] flex-col overflow-hidden text-[7.600px]">
                    {CATS.map(([n, t, c], i) => (
                      <div key={n} className={`flex h-[9.940px] shrink-0 items-center border-b border-[#9fb0dc] leading-[9px] ${i === 11 ? "bg-[#0c1450]" : i % 2 ? "bg-[#dcdce8]" : "bg-[#d0d0e6]"}`}>
                        <span className="w-[14px] shrink-0 pl-px text-[7.600px] text-[#8e9abd]">{n}</span><span className={c}>{t}</span>
                      </div>
                    ))}
                  </div>
                  <div className="ml-auto flex w-[3px] flex-col justify-between bg-[#e3ebf8]"><div className="h-[13px] bg-white" /><div className="h-[12px] bg-white" /></div>
                </div>
              </div>
              <div className="mt-[1px] flex h-[10px] items-center border border-[#5b74b8] pl-[3px] text-[6.500px] leading-[8px]">
                <span className="flex h-[6px] w-[20px] items-center justify-center bg-[#1f45bc] text-[5.500px] font-bold text-white">OH</span>
                <span className="flex-1 text-center text-[6.300px] text-[#f03040]">ON THE FLY</span>
              </div>
            </div>
          </div>
          <div className={`flex h-[11px] items-center text-[6.500px] font-semibold text-[#33333d] ${COND}`}>
            <span className="flex-1 pl-[229px] text-[7.300px]">LCD DISPLAY</span>
            <span className="text-[6px] tracking-[1.200px] text-[#85858c]">VIRTUAL&nbsp; SOUND&nbsp; WORKSTATION</span>
          </div>
        </div>
        <div className="mt-[4px] flex h-[90px] w-[528px] shrink-0 flex-col overflow-hidden bg-[#e9e9eb] [clip-path:polygon(0_0,100%_0,100%_30%,99%_100%,0.800%_100%,0_50%)]">
          <div className="flex h-[5px] shrink-0 items-center overflow-hidden bg-[#d5d5d9]">
            <div className="ml-[17px] h-[2px] w-[99px] bg-[repeating-linear-gradient(90deg,#55555e_0_5px,transparent_5px_9px)]" />
            <span className={`ml-[94px] inline-block rotate-180 text-[8px] leading-[6px] font-bold tracking-[9.500px] text-[#3c3c46] ${SANS}`}>LUXONIX</span>
          </div>
          <div className={`flex h-[35px] shrink-0 bg-linear-to-b from-[#f6f6f8] to-[#e4e4e8] pt-[12px] pl-[14px] text-[6.800px] font-bold text-[#4a4a52] ${COND}`}>
            <HwButton label="PRIOR" w="w-[22px]" />
            <div className="ml-[5px] flex w-[76px] flex-col items-center">
              <div className="h-[8px] w-full border border-r-8 border-[#55555e] bg-[#2a2370]" />
              <span className="mt-px leading-[8px]">▲ MAIN / SUB ▼</span>
            </div>
            <div className="flex w-[61px] flex-col items-center">
              <div className="flex h-[8px] w-full items-center border border-[#77777f] bg-[#d8d8dc] px-[4px]"><div className="h-[2px] w-[22px] bg-[#66666e]" /><div className="h-[6px] w-[20px] border-x border-[#8b8b92] bg-white" /><div className="h-[2px] w-[7px] bg-[#66666e]" /></div>
              <span className="mt-px leading-[8px]">◢ LEVEL</span>
            </div>
            <HwButton label="PANIC" w="ml-[10px] w-[22px]" />
            <Icon w={8} h={13} className="ml-[7px]"><path d="M7 1V12L1 6.500Z" fill="#ededf0" stroke="#77777f" /></Icon>
            <div className={`mt-[-5px] ml-[3px] h-[23px] w-[71px] border-2 border-[#9c9ca6] bg-linear-to-r from-[#b9b5ee] to-[#9d9fd8] pl-[2px] text-[7.500px] leading-[9px] font-normal text-[#34347a] ${ARIAL}`}>Piano<br />SynthString 5</div>
            <Icon w={8} h={13} className="ml-[3px]"><path d="M1 1V12L7 6.500Z" fill="#ededf0" stroke="#77777f" /></Icon>
            <div className="ml-[7px] flex">
              <HwButton label="MIXER" w="w-[21.500px]" />
              <HwButton label="PRESET" w="w-[21.500px]" red />
              <HwButton label="SEQ" w="w-[21.500px]" />
              <HwButton label="EDIT" w="w-[21.500px]" />
              <HwButton label="SETUP" w="w-[21.500px]" />
            </div>
            <HwButton label="SAVE" w="ml-[9px] w-[22px]" />
            <div className={`mt-[-11px] ml-[10px] flex flex-col text-[11.500px] leading-[13px] font-bold text-[#3c3c44] ${SANS}`}>PURITY<span className="h-px w-[46px] bg-[#a0a0a6]" /></div>
          </div>
          <div className="flex">
            <Icon w={105} h={50} className="text-[#44444c]">
              <path d="M28 34V18H40V34" fill="none" stroke="#c2c2c8" strokeWidth="1.500" /><path d="M27 18H41" stroke="#8a8a92" strokeWidth="2" /><path d="M32 15L34.500 12L37 15Z" fill="#99999f" />
              <rect x="75" y="11" width="6" height="30" rx="1" /><rect x="87" y="11" width="6" height="30" rx="1" />
              <path d="M75 25H81M75 28H81M87 38H93" stroke="#b5b5bb" />
              <path d="M10 0L105 4" stroke="#c8c8cd" />
            </Icon>
            <PianoKeys />
          </div>
        </div>
      </div>
    </div>
  );
}

const CHANNELS = [
  ["1", "Kick"], ["2", "Clap"], ["3", "Hat"], ["---", "Purity #2"], ["---", "Purity #3"], ["---", "Purity"], ["4", "Snare"],
];

function StepRow() {
  return (
    <div className="ml-[11px] flex gap-[4.520px]">
      {Array.from({ length: 16 }, (_, i) => (
        <div key={i} className={`flex h-[22px] w-[12.500px] shrink-0 justify-center rounded-[3px] border border-b-2 pt-[4px] ${Math.floor(i / 4) % 2 ? "border-[#3d3033] bg-linear-to-b from-[#7c6163] to-[#614a4d]" : "border-[#333a3e] bg-linear-to-b from-[#6a7276] to-[#545c60]"}`}>
          <div className="h-[1.500px] w-[8px] bg-[#2e2e32]" />
        </div>
      ))}
    </div>
  );
}

function ChannelRack() {
  return (
    <div className="absolute top-[350px] left-[761px] flex h-[325px] w-[519px] flex-col bg-[#444c50]">
      <div className="flex h-[31px] shrink-0 items-center bg-[#40484c] pr-[2px]">
        <div className="mb-[14px] ml-[114px] h-[12px] w-[87px] bg-[#343b40]" />
        <SpeakerOut className="ml-[29px] text-[#9ea5a9]" />
        <span className={`ml-[4px] pb-px text-[13.500px] font-semibold text-[#9ea5a9] ${SANS}`}>Channel rack</span>
        <span className={`ml-auto pb-[3px] text-[12px] text-[#9aa2a6] ${COND}`}>Swing</span>
        <Icon w={66} h={24} className="ml-[2px] text-[#2b3136]">
          <path d="M14 9H66" stroke="#343b40" strokeWidth="2" /><path d="M38 14V21M63 14V21" stroke="#343b40" />
          <ellipse cx="11" cy="11" rx="8.500" ry="10" /><path d="M11 5V17" stroke="#9e4146" strokeWidth="1.500" />
        </Icon>
        <Icon w={11} h={10} className="ml-[18px] text-[#a88b38]"><path d="M0 0H5V10H0ZM6 0H11V10H6Z" /></Icon>
      </div>
      <div className="mr-[2px] ml-[5px] flex h-[262px] shrink-0 flex-col bg-[#5d656a] pt-[18.500px]">
        {CHANNELS.map(([n, name], i) => (
          <div key={i} className={`flex h-[32px] shrink-0 items-center pl-[9px] ${COND}`}>
            <div className="size-[10px] shrink-0 rounded-full border border-[#3e6426] bg-[#a4f05a]" />
            <Icon w={36} h={20} className="ml-[5px] text-[#2f363b]">
              <ellipse cx="8.500" cy="10" rx="7" ry="8" fill="#363d42" /><ellipse cx="26.500" cy="10" rx="7" ry="8" fill="#363d42" />
              <path d="M8.500 4V9M27 10H32" stroke="#c8ced1" strokeWidth="1.500" />
            </Icon>
            <div className="ml-[5px] flex h-[27px] w-[35px] shrink-0 items-center justify-end rounded-[3px] border border-[#444c50] bg-[#596165] pr-[2px] text-[17px] font-light text-[#a9b1b5]">
              {n}<Icon w={4} h={14} className="ml-[2px] text-[#3f474b]"><path d="M0.500 1L3 3L0.500 5M3.500 9L1 11L3.500 13" fill="none" stroke="currentColor" /></Icon>
            </div>
            <div className={`ml-[9px] flex h-[28px] w-[88px] shrink-0 items-center justify-center rounded-[2px] border border-[#353c40] pb-px text-[12.500px] font-semibold tracking-[0.600px] text-[#d5dadd] ${i > 2 && i < 6 ? "bg-[#5b4246]" : "bg-[#50585d]"}`}>{name}</div>
            <div className={`ml-[10px] w-[8px] shrink-0 border ${i === 3 ? "h-[27px] border-2 border-[#a3d83c] bg-[#455028]" : "h-[23px] border-[#3c4448] bg-[#50585d]"}`} />
            {i === 3 ? (
              <svg width="274" height="32" className="ml-[8px] block shrink-0"><rect width="274" height="32" fill="#3f464b" /><path d="M1 21.500H137M205 21.500H273M137 2H205" stroke="#86bd98" strokeWidth="2.500" /></svg>
            ) : <StepRow />}
          </div>
        ))}
      </div>
      <div className="ml-[228px] h-[8px] w-[274px] bg-[#363d42]" />
      <div className="mt-[8px] mr-[7px] flex justify-end text-[#262d31]"><Icon w={6} h={10}><path d="M1 1L5 5L1 9" fill="none" stroke="currentColor" strokeWidth="1.500" /></Icon></div>
    </div>
  );
}

const BANNERS = [
  ["top-[141px]", "Instrumentals", "text-[52px] tracking-[0.200px] -translate-y-[2px]"],
  ["top-[360px]", "Musical", "text-[55px] pr-[45px] -translate-y-[11px]"],
  ["top-[426px]", "instruments", "text-[55px] pr-[46px]"],
  ["top-[565px]", "Sound", "text-[56.500px] -translate-y-[5px]"],
  ["top-[648px]", "engineering", "text-[56.500px] pl-px -translate-y-[9px]"],
];

export default function App() {
  return (
    <div className="relative flex h-[720px] w-[1280px] flex-col overflow-hidden bg-[#596167]">
      <div className="flex h-[3px] shrink-0 bg-[#4f565b]">
        <div className="ml-[471px] h-[2px] w-[51px] bg-[#1a70bd]" />
        <div className="h-[2px] w-[206px] bg-[#e9edef]" />
      </div>
      <TopToolbar />
      <SecondToolbar />
      <div className="flex h-[589px] shrink-0 border-t border-[#3b4246]">
        <Browser />
        <Playlist />
      </div>
      <PluginWindow />
      <ChannelRack />
      {BANNERS.map(([top, text, p]) => (
        <div key={text} className={`absolute left-[697px] flex h-[46px] w-[408px] items-center justify-center bg-[#ededf0]/90 ${top}`}>
          <span className={`leading-[46px] font-extrabold text-[#00208f] ${SANS} ${p}`}>{text}</span>
        </div>
      ))}
    </div>
  );
}
